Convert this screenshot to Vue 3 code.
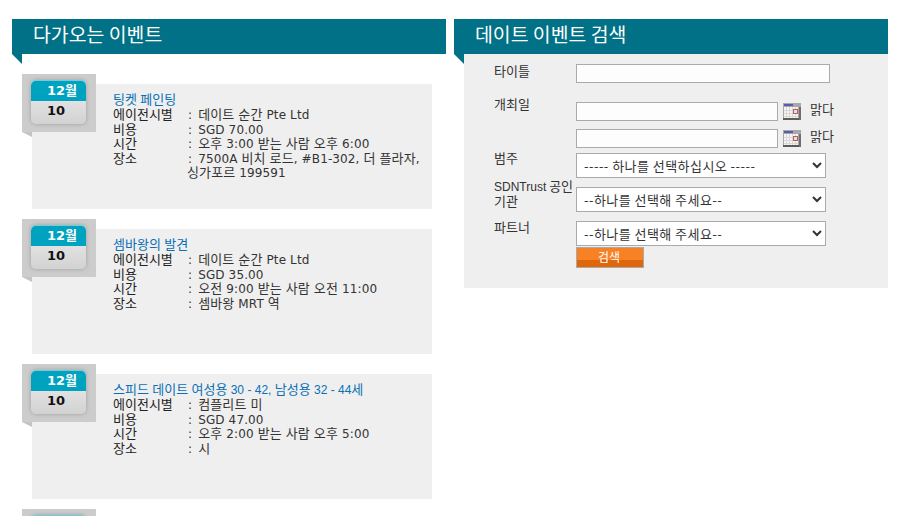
<script setup>
const events = [
  { title: '팅켓 페인팅', org: '데이트 순간 Pte Ltd', fee: 'SGD 70.00', time: '오후 3:00 받는 사람 오후 6:00', place: '7500A 비치 로드, #B1-302, 더 플라자, 싱가포르 199591' },
  { title: '셈바왕의 발견', org: '데이트 순간 Pte Ltd', fee: 'SGD 35.00', time: '오전 9:00 받는 사람 오전 11:00', place: '셈바왕 MRT 역' },
  { title: '스피드 데이트 여성용 30 - 42, 남성용 32 - 44세', org: '컴플리트 미', fee: 'SGD 47.00', time: '오후 2:00 받는 사람 오후 5:00', place: '시' }
]
const rowsOf = (e) => [
  ['에이전시별', e.org],
  ['비용', e.fee],
  ['시간', e.time],
  ['장소', e.place]
]
// Hangul and Latin runs use different sizes so both keep the reference's widths.
const runs = (s) => s.match(/[가-힣]+|[^가-힣]+/g).map((t) => ({ t, ko: /[가-힣]/.test(t) }))
</script>

<template>
  <div class="page">
    <section class="left">
      <h2 class="head">다가오는 이벤트</h2>
      <div class="list">
        <article v-for="e in events" :key="e.title" class="card">
          <div class="badge">
            <div class="cal">
              <div class="month">12월</div>
              <div class="day">10</div>
            </div>
          </div>
          <a class="title"><span v-for="(r, i) in runs(e.title)" :key="i" :class="{ ko: r.ko }">{{ r.t }}</span></a>
          <div v-for="row in rowsOf(e)" :key="row[0]" class="info">
            <div class="key">{{ row[0] }}</div>
            <div class="val"><span class="colon">:</span><span v-for="(r, i) in runs(row[1])" :key="i" :class="{ ko: r.ko }">{{ r.t }}</span></div>
          </div>
        </article>
        <article class="card">
          <div class="badge"><div class="cal"><div class="month"></div></div></div>
        </article>
      </div>
    </section>

    <section class="right">
      <h2 class="head">데이트 이벤트 검색</h2>
      <form class="form" @submit.prevent>
        <div class="row r-title">
          <label class="lab">타이틀</label>
          <input class="inp wide" type="text" />
        </div>

        <div class="row r-date">
          <label class="lab">개최일</label>
          <div class="dates">
            <div v-for="n in 2" :key="n" class="date">
              <input class="inp short" type="text" />
              <svg class="calicon" width="18" height="17" viewBox="0 0 18 17">
                <rect width="18" height="17" fill="#a8a8a8" />
                <rect x="1" y="4" width="14" height="11" fill="#f4f4f4" />
                <rect x="1" y="1" width="9" height="2" fill="#5a5ab0" />
                <path d="M1 7.5h14M1 10.5h14M1 13.5h14M3.5 4v11M6.5 4v11M9.5 4v11M12.5 4v11" stroke="#d8d8d8" stroke-width="1" fill="none" />
                <rect x="0" y="15" width="18" height="2" fill="#5c5c5c" />
                <rect x="16" y="4" width="2" height="13" fill="#6e6e6e" />
                <rect x="10.5" y="6.5" width="4" height="4" fill="#eedcdc" stroke="#b85c5c" />
              </svg>
              <span class="clear">맑다</span>
            </div>
          </div>
        </div>

        <div class="row r-cat">
          <label class="lab">범주</label>
          <select class="sel"><option>----- 하나를 선택하십시오 -----</option></select>
        </div>

        <div class="row r-sel">
          <label class="lab lab-trust"><span class="lat">SDNTrust</span> 공인 기관</label>
          <select class="sel"><option>--하나를 선택해 주세요--</option></select>
        </div>

        <div class="row r-sel">
          <label class="lab lab-partner">파트너</label>
          <div class="stack">
            <select class="sel"><option>--하나를 선택해 주세요--</option></select>
            <button class="btn" type="submit">검색</button>
          </div>
        </div>
      </form>
    </section>
  </div>
</template>

<style>
html, body { margin: 0; background: #fff; overflow: hidden; }
</style>

<style scoped>
.page {
  width: 903px;
  height: 516px;
  overflow: hidden;
  display: flex;
  align-items: flex-start;
  padding: 19px 0 0 12px;
  box-sizing: border-box;
  gap: 8px;
  font-family: "DejaVu Sans", "Noto Sans CJK KR", sans-serif;
  font-size: 12px;
  color: #333;
}
.left, .right { width: 434px; flex: none; }
.ko { font-family: "Noto Sans CJK KR", sans-serif; font-size: 13px; line-height: 0; }
.head {
  position: relative;
  margin: 0;
  height: 35px;
  background: #007186;
  color: #fff;
  font: 400 19.4px/29px "Noto Sans CJK KR", sans-serif;
  padding-left: 21px;
}
.head::after {
  content: "";
  position: absolute;
  left: 0;
  top: 35px;
  border-top: 10px solid #007186;
  border-left: 10px solid transparent;
}
.list {
  padding: 30px 0 0 20px;
  display: flex;
  flex-direction: column;
  gap: 20px;
}
.card {
  position: relative;
  width: 400px;
  height: 125px;
  flex: none;
  box-sizing: border-box;
  background: #efefef;
  padding: 9px 10px 0 81px;
}
.badge {
  position: absolute;
  left: -10px;
  top: -10px;
  width: 74px;
  height: 58px;
  background: #ccc;
}
.badge::after {
  content: "";
  position: absolute;
  left: 0;
  top: 58px;
  border-top: 5px solid #c4c4c4;
  border-left: 10px solid transparent;
}
.cal {
  position: absolute;
  left: 9px;
  top: 6px;
  width: 55px;
  height: 44px;
  border-radius: 5px;
  background: linear-gradient(#efefef, #d2d2d2);
  box-shadow: 0 0 4px rgba(0, 0, 0, .22);
}
.month {
  height: 21px;
  border-radius: 5px 5px 0 0;
  background: #00a3bf;
  box-shadow: inset 0 1px 0 rgba(255, 255, 255, .45);
  color: #fff;
  font: 700 13px/21px "DejaVu Sans", "Noto Sans CJK KR", sans-serif;
  padding-left: 16px;
}
.day {
  color: #111;
  font: 700 13px/19px "DejaVu Sans", sans-serif;
  padding-left: 16px;
}
.title {
  display: block;
  height: 15px;
  font: 12px/14px "Liberation Sans", sans-serif;
  color: #0a6fb5;
  white-space: nowrap;
}
.info {
  display: flex;
  line-height: 14.5px;
}
.key {
  flex: none;
  width: 74px;
  margin-top: -1px;
  font: 13px/14.5px "Noto Sans CJK KR", sans-serif;
  color: #222;
}
.val { flex: 1; min-width: 0; letter-spacing: .12px; }
.colon { padding: 0 6px 0 1px; }
.form {
  margin-left: 10px;
  height: 234px;
  box-sizing: border-box;
  background: #efefef;
  padding: 10px 0 0 30px;
  font: 13px/14px "Noto Sans CJK KR", sans-serif;
  color: #333;
}
.lat { font: 12px/14px "Liberation Sans", sans-serif; }
.row { display: flex; align-items: flex-start; }
.r-date { margin-top: 19px; }
.r-cat { margin-top: 5px; }
.r-sel { margin-top: 9px; }
.lab { display: block; flex: none; width: 82px; }
.r-date .lab { margin-top: -5px; }
.r-cat .lab { margin-top: -2px; }
.lab-trust { margin-top: -8px; }
.lab-partner { margin-top: -1px; }
.inp {
  box-sizing: border-box;
  height: 19px;
  border: 1px solid #aaa;
  background: #fdfdfd;
  padding: 0;
  display: block;
  flex: none;
}
.wide { width: 254px; }
.short { width: 202px; }
.dates { display: flex; flex-direction: column; gap: 8px; }
.date { display: flex; align-items: center; }
.calicon { margin-left: 5px; flex: none; }
.clear { margin: 0 0 5px 9px; }
.sel {
  box-sizing: border-box;
  width: 250px;
  height: 25px;
  border: 1px solid #aaa;
  background: #fff;
  color: #333;
  font: 13px "Noto Sans CJK KR", sans-serif;
  letter-spacing: .45px;
  padding-left: 3px;
  display: block;
  border-radius: 0;
}
.btn {
  display: block;
  box-sizing: border-box;
  width: 68px;
  height: 21px;
  margin-top: 1px;
  border: 1px solid #aaa;
  padding: 0 2px 2px 0;
  background: linear-gradient(#f78125 0 12px, #e0660b 12px);
  color: #fff;
  font: 12px "Noto Sans CJK KR", sans-serif;
}
</style>
